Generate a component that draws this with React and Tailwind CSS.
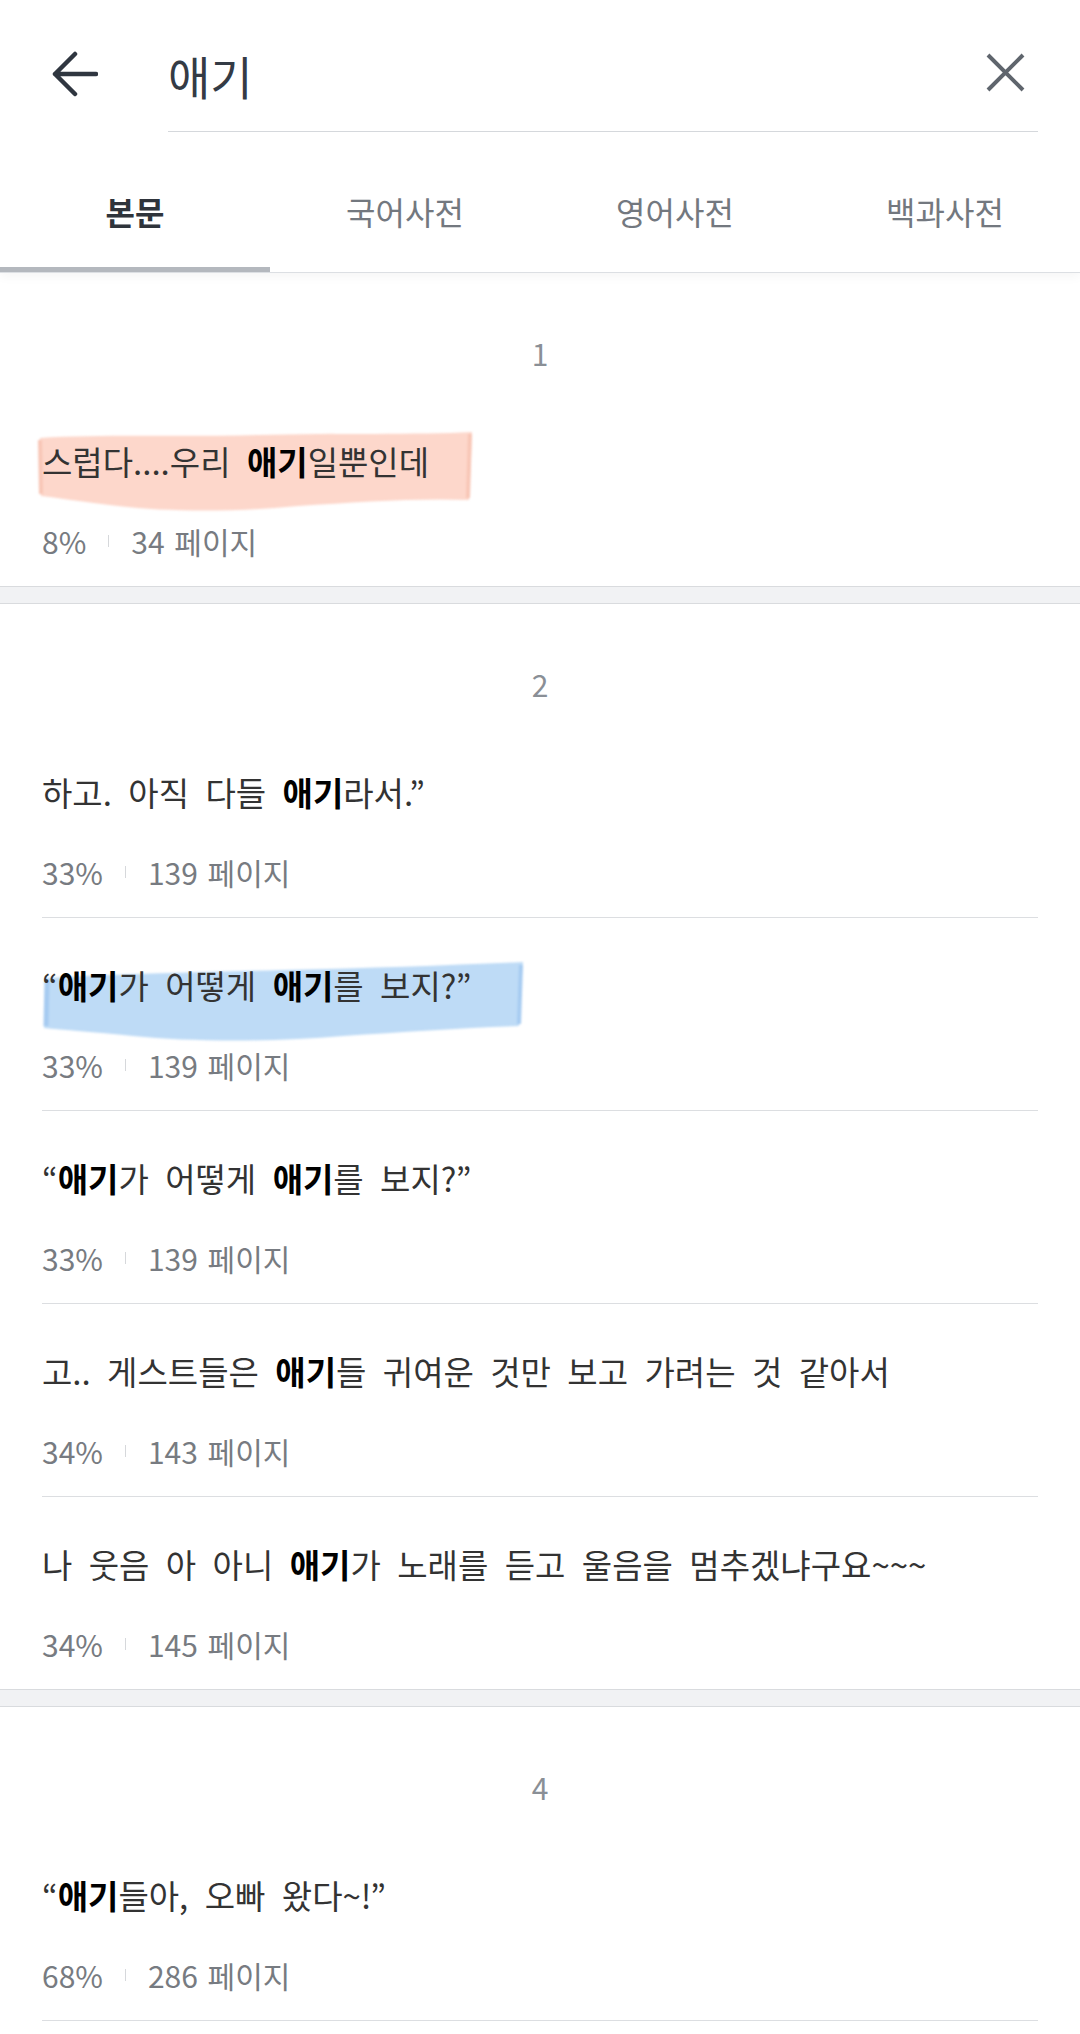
import React from 'react';

const sections = [
  {
    no: 1,
    items: [
      { parts: ['스럽다....우리 ', ['애기'], '일뿐인데'], pct: '8%', page: '34 페이지', mark: 'pink' },
    ],
  },
  {
    no: 2,
    items: [
      { parts: ['하고. 아직 다들 ', ['애기'], '라서.”'], pct: '33%', page: '139 페이지' },
      { parts: ['“', ['애기'], '가 어떻게 ', ['애기'], '를 보지?”'], pct: '33%', page: '139 페이지', mark: 'blue' },
      { parts: ['“', ['애기'], '가 어떻게 ', ['애기'], '를 보지?”'], pct: '33%', page: '139 페이지' },
      { parts: ['고.. 게스트들은 ', ['애기'], '들 귀여운 것만 보고 가려는 것 같아서'], pct: '34%', page: '143 페이지' },
      { parts: ['나 웃음 아 아니 ', ['애기'], '가 노래를 듣고 울음을 멈추겠냐구요~~~'], pct: '34%', page: '145 페이지' },
    ],
  },
  {
    no: 4,
    items: [
      { parts: ['“', ['애기'], '들아, 오빠 왔다~!”'], pct: '68%', page: '286 페이지' },
    ],
    openEnd: true,
  },
];

const tabs = ['본문', '국어사전', '영어사전', '백과사전'];

// hand-drawn marker strokes over a sentence
const PinkMark = () => (
  <svg className="absolute left-[-4px] top-[38px] w-[436px] h-[82px] blur-[1px]" viewBox="0 0 436 82">
    <path
      d="M2 6 C60 2 140 5 220 3 C300 1 380 3 434 0 L433 26 L431 68 C380 66 320 70 260 74 C200 80 130 80 80 74 C45 70 20 66 3 64 L1 30 Z"
      fill="#fdd7cb"
    />
    <path d="M2 8 L3 62" stroke="#f8c6b6" strokeWidth="4" fill="none" />
    <path d="M432 2 L430 66" stroke="#f8c6b6" strokeWidth="4" fill="none" />
  </svg>
);

const BlueMark = () => (
  <svg className="absolute left-[1px] top-[44px] w-[482px] h-[82px] blur-[1px]" viewBox="0 0 482 82">
    <path
      d="M2 16 C80 12 160 10 240 8 C330 6 410 3 480 0 L478 30 L476 64 C420 66 360 70 300 74 C230 80 150 80 90 74 C50 70 20 68 1 66 L3 40 Z"
      fill="#bedbf6"
    />
    <path d="M4 18 L3 64" stroke="#a6cbf1" strokeWidth="5" fill="none" />
    <path d="M478 3 L476 62" stroke="#a6cbf1" strokeWidth="4" fill="none" />
  </svg>
);

const Item = ({ item, last }) => (
  <div className={`relative pt-[47px] pb-[28px] ${last ? '' : 'border-b border-[#dcdee1]'}`}>
    {item.mark === 'pink' && <PinkMark />}
    {item.mark === 'blue' && <BlueMark />}
    <p className="relative text-[33px] leading-[40px] text-[#333333] whitespace-nowrap [word-spacing:9px]">
      {item.parts.map((p, i) =>
        Array.isArray(p) ? (
          <b key={i} className="font-bold text-black">{p[0]}</b>
        ) : (
          <span key={i}>{p}</span>
        )
      )}
    </p>
    <div className="relative mt-[43px] h-[34px] flex items-center text-[30px] leading-[34px] text-[#777b81] [word-spacing:3px]">
      <span>{item.pct}</span>
      <span className="mx-[22px] w-px h-[12px] bg-[#d6d8db]"></span>
      <span>{item.page}</span>
    </div>
  </div>
);

const App = () => {
  return (
    <div className="w-[1080px] bg-white font-['Noto_Sans_CJK_KR','Noto_Sans',sans-serif]">
      {/* Header */}
      <header className="relative z-10 bg-white border-b border-[#dcdfe3] shadow-[0_4px_10px_rgba(0,0,0,0.04)]">
        <div className="flex h-[132px]">
          <button className="ml-[50px] mt-[50px] w-[48px] h-[48px] self-start">
            <svg viewBox="0 0 48 48" className="w-[48px] h-[48px]" fill="none" stroke="#2f3640" strokeWidth="4.5" strokeLinecap="round" strokeLinejoin="round">
              <path d="M46 24 H5 M25 4 L5 24 L25 44" />
            </svg>
          </button>
          <div className="ml-[70px] mr-[42px] flex-1 flex items-start border-b border-[#d5d8dc]">
            <span className="flex-1 mt-[47px] text-[46px] leading-[56px] text-[#343b45]">애기</span>
            <button className="mt-[49px] mr-[9px] w-[48px] h-[48px]">
              <svg viewBox="0 0 48 48" className="w-[48px] h-[48px]" fill="none" stroke="#5f656d" strokeWidth="4">
                <path d="M7 6 L42 41 M42 6 L7 41" />
              </svg>
            </button>
          </div>
        </div>
        <div className="flex h-[140px]">
          {tabs.map((t, i) => (
            <div key={t} className="relative flex-1 pt-[59px] text-center">
              <span className={`text-[32px] leading-[40px] ${i === 0 ? 'font-bold text-[#2f343b]' : 'text-[#73787f]'}`}>{t}</span>
              {i === 0 && <div className="absolute left-0 right-0 bottom-0 h-[5px] bg-[#b4b8be]"></div>}
            </div>
          ))}
        </div>
      </header>

      {/* Results */}
      {sections.map((s, si) => (
        <div key={s.no}>
          {si > 0 && <div className="h-[18px] bg-[#f1f2f4] border-y border-[#d9dbde]"></div>}
          <section className="bg-white">
            <div className="pt-[60px] h-[100px] text-center text-[30px] leading-[40px] text-[#8a8f96]">{s.no}</div>
            <div className="mx-[42px] mt-[21px]">
              {s.items.map((it, ii) => (
                <Item key={ii} item={it} last={ii === s.items.length - 1 && !s.openEnd} />
              ))}
            </div>
          </section>
        </div>
      ))}
    </div>
  );
};

export default App;
